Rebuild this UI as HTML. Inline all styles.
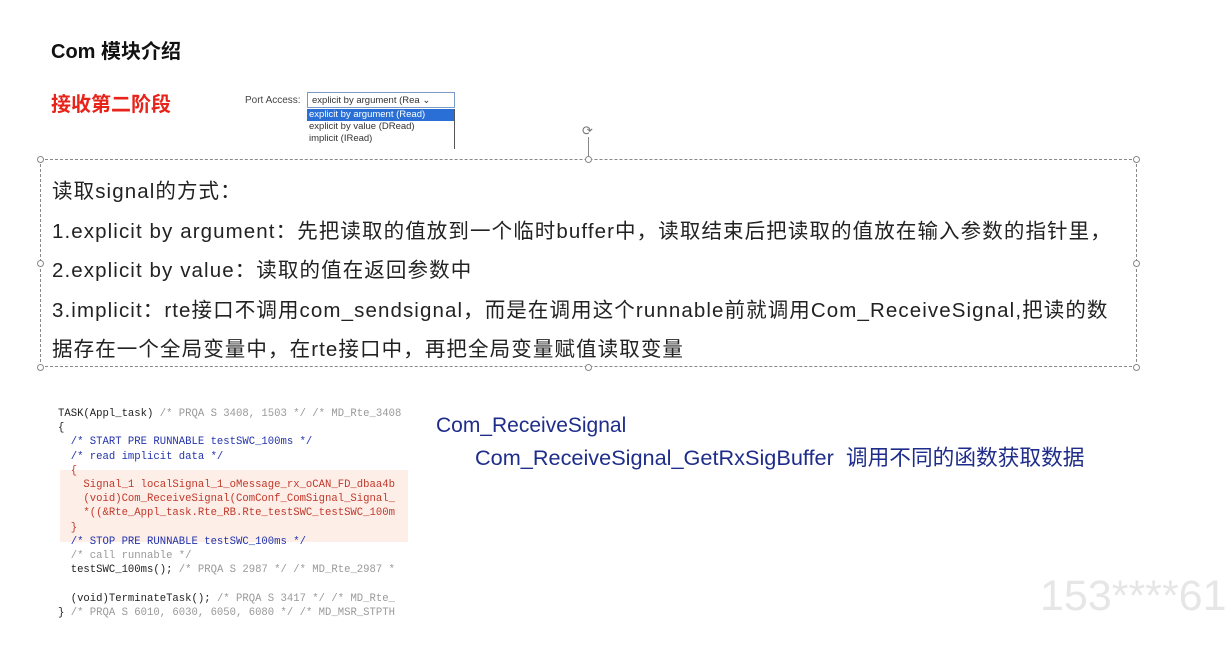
<!DOCTYPE html>
<html><head><meta charset="utf-8"><style>
*{margin:0;padding:0;box-sizing:border-box}
body{width:1231px;height:659px;background:#fff;position:relative;overflow:hidden;font-family:"Liberation Sans","Noto Sans CJK SC",sans-serif;color:#111}
.a{position:absolute;white-space:nowrap}
.h{width:7px;height:7px;border:1px solid #888;border-radius:50%;background:#fff;position:absolute}
.code{font-family:"Liberation Mono",monospace;font-size:10.6px;line-height:14.2px;color:#222}
.c{color:#999}.b{color:#2233aa}.r{color:#c0392b}
</style></head><body>
<div class="a" style="left:51px;top:35px;font-size:20px;font-weight:bold">Com 模块介绍</div>
<div class="a" style="left:51px;top:88px;font-size:20px;font-weight:bold;color:#e8231a">接收第二阶段</div>
<div class="a" style="left:245px;top:95px;font-size:10px;color:#444">Port Access:</div>
<div class="a" style="left:307px;top:92px;width:148px;height:16px;border:1px solid #7a9ac8;font-size:9.5px;padding:2px 4px;color:#333">explicit by argument (Rea ⌄</div>
<div class="a" style="left:307px;top:109px;width:148px;height:40px;border-right:1px solid #555;font-size:9.5px;line-height:12px;color:#333">
<div style="background:#2a6fd6;color:#fff;padding-left:2px">explicit by argument (Read)</div>
<div style="padding-left:2px">explicit by value (DRead)</div>
<div style="padding-left:2px">implicit (IRead)</div></div>
<div class="a" style="left:582px;top:123px;font-size:13px;color:#777">⟳</div>
<div class="a" style="left:588px;top:137px;width:1px;height:22px;background:#888"></div>
<div class="a" style="left:40px;top:159px;width:1097px;height:208px;border:1px dashed #888"></div>
<div class="h" style="left:37px;top:156px"></div><div class="h" style="left:585px;top:156px"></div><div class="h" style="left:1133px;top:156px"></div>
<div class="h" style="left:37px;top:260px"></div><div class="h" style="left:1133px;top:260px"></div>
<div class="h" style="left:37px;top:364px"></div><div class="h" style="left:585px;top:364px"></div><div class="h" style="left:1133px;top:364px"></div>
<div class="a" style="left:52px;top:172px;font-size:20.5px;line-height:39.5px;letter-spacing:1.1px;color:#222">
<div>读取signal的方式：</div>
<div>1.explicit by argument：先把读取的值放到一个临时buffer中，读取结束后把读取的值放在输入参数的指针里，</div>
<div>2.explicit by value：读取的值在返回参数中</div>
<div>3.implicit：rte接口不调用com_sendsignal，而是在调用这个runnable前就调用Com_ReceiveSignal,把读的数</div>
<div>据存在一个全局变量中，在rte接口中，再把全局变量赋值读取变量</div>
</div>
<div class="a" style="left:60px;top:470px;width:348px;height:72px;background:#fdeee8"></div>
<div class="a code" style="left:58px;top:407px;width:350px;overflow:hidden">
<div>TASK(Appl_task) <span class="c">/* PRQA S 3408, 1503 */ /* MD_Rte_3408</span></div>
<div>{</div>
<div class="b">&nbsp;&nbsp;/* START PRE RUNNABLE testSWC_100ms */</div>
<div class="b">&nbsp;&nbsp;/* read implicit data */</div>
<div class="r">&nbsp;&nbsp;{</div>
<div class="r">&nbsp;&nbsp;&nbsp;&nbsp;Signal_1 localSignal_1_oMessage_rx_oCAN_FD_dbaa4b</div>
<div class="r">&nbsp;&nbsp;&nbsp;&nbsp;(void)Com_ReceiveSignal(ComConf_ComSignal_Signal_</div>
<div class="r">&nbsp;&nbsp;&nbsp;&nbsp;*((&amp;Rte_Appl_task.Rte_RB.Rte_testSWC_testSWC_100m</div>
<div class="r">&nbsp;&nbsp;}</div>
<div class="b">&nbsp;&nbsp;/* STOP PRE RUNNABLE testSWC_100ms */</div>
<div class="c">&nbsp;&nbsp;/* call runnable */</div>
<div>&nbsp;&nbsp;testSWC_100ms(); <span class="c">/* PRQA S 2987 */ /* MD_Rte_2987 *</span></div>
<div>&nbsp;</div>
<div>&nbsp;&nbsp;(void)TerminateTask(); <span class="c">/* PRQA S 3417 */ /* MD_Rte_</span></div>
<div>} <span class="c">/* PRQA S 6010, 6030, 6050, 6080 */ /* MD_MSR_STPTH</span></div>
</div>
<div class="a" style="left:436px;top:414px;font-size:21px;color:#1f2d8a">Com_ReceiveSignal</div>
<div class="a" style="left:475px;top:441px;font-size:21.7px;color:#1f2d8a">Com_ReceiveSignal_GetRxSigBuffer&nbsp; 调用不同的函数获取数据</div>
<div class="a" style="left:1040px;top:572px;font-size:43px;color:#e6e6e6">153****61</div>
</body></html>
